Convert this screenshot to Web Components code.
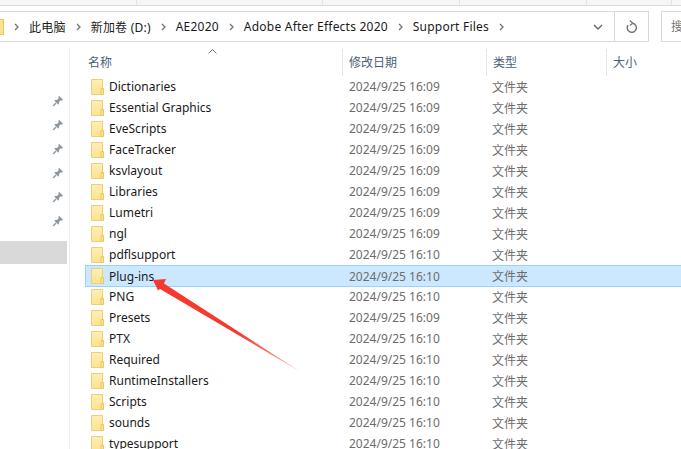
<!DOCTYPE html>
<html><head><meta charset="utf-8"><style>
html,body{margin:0;padding:0;background:#fff;overflow:hidden}
body{width:681px;height:449px;font-family:"Noto Sans","Noto Sans CJK SC",sans-serif}
</style></head><body>
<explorer-window></explorer-window>
<script>
const folderSvg=`<svg width="13" height="16" viewBox="0 0 13 16"><defs><linearGradient id="g" x1="0" y1="0" x2="0" y2="1"><stop offset="0" stop-color="#ffefb4"/><stop offset="1" stop-color="#fde391"/></linearGradient></defs><path d="M.5.5h11v15H.5z" fill="url(#g)" stroke="#eccf78"/><path d="M10 9.5h2.5v6H10z" fill="#fde391" stroke="#e8c666"/></svg>`;
class FileRow extends HTMLElement{
  connectedCallback(){
    const s=this.attachShadow({mode:'open'});
    s.innerHTML=`<style>
    :host{display:grid;grid-template-columns:258px 143px 1fr;height:21px;align-items:center;box-sizing:border-box;margin-left:16px;font-size:12px;color:#1a1a1a;padding-left:5px}
    :host([selected]){height:22px;margin-left:15px;padding-left:5px;background:#cce8ff;border:1px solid #99d1ff;border-right:none;margin-bottom:-1px}
    .n{display:flex;align-items:center;gap:5px;white-space:nowrap}
    svg{display:block;flex:none}
    .m{color:#6d6d6d;white-space:nowrap}
    </style><div class="n">${folderSvg}<span>${this.getAttribute('name')}</span></div><div class="m">${this.getAttribute('date')}</div><div class="m">文件夹</div>`;
  }
}
customElements.define('file-row',FileRow);
class ColHead extends HTMLElement{
  connectedCallback(){
    const s=this.attachShadow({mode:'open'});
    s.innerHTML=`<style>:host{display:block;box-sizing:border-box;height:27px;padding:4px 0 0 6px;font-size:12px;color:#4c607a;border-right:1px solid #e5e5e5}:host([last]){border-right:none}</style><slot></slot>`;
  }
}
customElements.define('col-head',ColHead);
class SideBar extends HTMLElement{
  connectedCallback(){
    const s=this.attachShadow({mode:'open'});
    const pin=`<svg width="12" height="12" viewBox="0 0 12 12"><path d="M7 .8 11.2 5 10 5.6 8.8 5.2 6.9 7.1 7 9 6.2 9.6 2.4 5.8 3 5 4.9 5.1 6.8 3.2 6.4 2Z" fill="#8b939c"/><path d="M4 8 1 11" stroke="#8b939c" stroke-width="1.2"/></svg>`;
    s.innerHTML=`<style>:host{display:block;box-sizing:border-box;width:70px;flex:none;border-right:1px solid #eee;padding-top:40px;height:401px;margin-top:1px}
    .p{height:24px;display:flex;justify-content:flex-end;align-items:center;padding-right:5px}
    .sel{height:23px;width:67px;background:#d9d9d9;margin-top:8px}</style>
    ${Array(6).fill('<div class="p">'+pin+'</div>').join('')}<div class="sel"></div>`;
  }
}
customElements.define('side-bar',SideBar);
class AddressBar extends HTMLElement{
  connectedCallback(){
    const s=this.attachShadow({mode:'open'});
    const ch=`<svg class="c" width="5" height="8" viewBox="0 0 5 8"><path d="M1 1l3 3-3 3" fill="none" stroke="#777" stroke-width="1.4"/></svg>`;
    const parts=['此电脑','新加卷 (D:)','AE2020','Adobe After Effects 2020','Support Files'];
    s.innerHTML=`<style>:host{display:flex;height:42px;box-sizing:border-box;padding-top:5px;background:#fff}
    .box{width:649px;height:31px;box-sizing:border-box;border:1px solid #d9d9d9;border-left:none;display:flex;align-items:center;font-size:12px;color:#1a1a1a;white-space:nowrap}
    .path{flex:1;display:flex;align-items:center;gap:10px;min-width:0;letter-spacing:.22px}
    .ico{width:4px;height:16px;background:#fde391;border:1px solid #e8c666;border-left:none;box-sizing:border-box}
    .dd{width:32px;display:flex;justify-content:center}
    .rf{width:34px;height:100%;border-left:1px solid #d9d9d9;display:flex;align-items:center;justify-content:center;box-sizing:border-box}
    .search{margin-left:12px;flex:1;height:31px;box-sizing:border-box;border:1px solid #d9d9d9;border-right:none;font-size:12px;color:#777;padding-left:9px;line-height:29px;overflow:hidden}
    </style><div class="box"><div class="path"><div class="ico"></div>${ch}${parts.map(p=>`<span>${p}</span>${ch}`).join('')}</div>
    <div class="dd"><svg width="10" height="6" viewBox="0 0 10 6"><path d="M1 1l4 4 4-4" fill="none" stroke="#666" stroke-width="1.4"/></svg></div>
    <div class="rf"><svg width="12" height="14" viewBox="0 0 12 14"><path d="M6.5 3.2A4.6 4.6 0 1 1 2 5.2" fill="none" stroke="#777" stroke-width="1.5"/><path d="M3.8 .6 6.8 3.2 3.8 5.6" fill="none" stroke="#777" stroke-width="1.3"/></svg></div></div><div class="search">搜</div>`;
  }
}
customElements.define('address-bar',AddressBar);
class TopStrip extends HTMLElement{
  connectedCallback(){
    const s=this.attachShadow({mode:'open'});
    s.innerHTML=`<style>:host{display:grid;grid-template-columns:137px 186px 137px 127px 85px 1fr;height:6px;box-sizing:border-box;background:#f5f6f7;border-bottom:1px solid #dadbdc}
    i{border-right:1px solid #e3e4e5}</style><i></i><i></i><i></i><i></i><i></i><b></b>`;
  }
}
customElements.define('top-strip',TopStrip);
const D9='2024/9/25 16:09',D0='2024/9/25 16:10';
const rows=[['Dictionaries',D9],['Essential Graphics',D9],['EveScripts',D9],['FaceTracker',D9],['ksvlayout',D9],['Libraries',D9],['Lumetri',D9],['ngl',D9],['pdflsupport',D0],['Plug-ins',D0,1],['PNG',D0],['Presets',D9],['PTX',D0],['Required',D0],['RuntimeInstallers',D0],['Scripts',D0],['sounds',D0],['typesupport',D0]];
class ExplorerWindow extends HTMLElement{
  connectedCallback(){
    const s=this.attachShadow({mode:'open'});
    s.innerHTML=`<style>:host{display:block;position:relative;width:681px;height:449px;overflow:hidden}
    .main{display:flex;height:401px}
    .list{flex:1;min-width:0;padding-top:1px;overflow:hidden}
    .heads{display:grid;grid-template-columns:273px 144px 120px 1fr;height:27px}
    .wrap{position:relative}
    .sort{position:absolute;left:138px;top:0}
    .arrow{position:absolute;left:0;top:0;pointer-events:none}
    </style>
    <top-strip></top-strip><address-bar></address-bar>
    <div class="main"><side-bar></side-bar><div class="list"><div class="wrap"><svg class="sort" width="9" height="5" viewBox="0 0 9 5"><path d="M.5 4.5l4-4 4 4" fill="none" stroke="#777"/></svg>
    <div class="heads"><col-head style="padding-left:18px">名称</col-head><col-head>修改日期</col-head><col-head>类型</col-head><col-head last>大小</col-head></div></div>
    ${rows.map(r=>`<file-row name="${r[0]}" date="${r[1]}"${r[2]?' selected':''}></file-row>`).join('')}
    </div></div>
    <svg class="arrow" width="681" height="449" viewBox="0 0 681 449"><defs><linearGradient id="a" gradientUnits="userSpaceOnUse" x1="240" y1="335" x2="300" y2="371"><stop offset="0" stop-color="#f5392d"/><stop offset="1" stop-color="#fbbcb6"/></linearGradient></defs><path d="M153 280 L166 279 L164 283.5 L300 371.5 L160 289 L158 290.5Z" fill="url(#a)"/></svg>`;
  }
}
customElements.define('explorer-window',ExplorerWindow);
</script></body></html>
